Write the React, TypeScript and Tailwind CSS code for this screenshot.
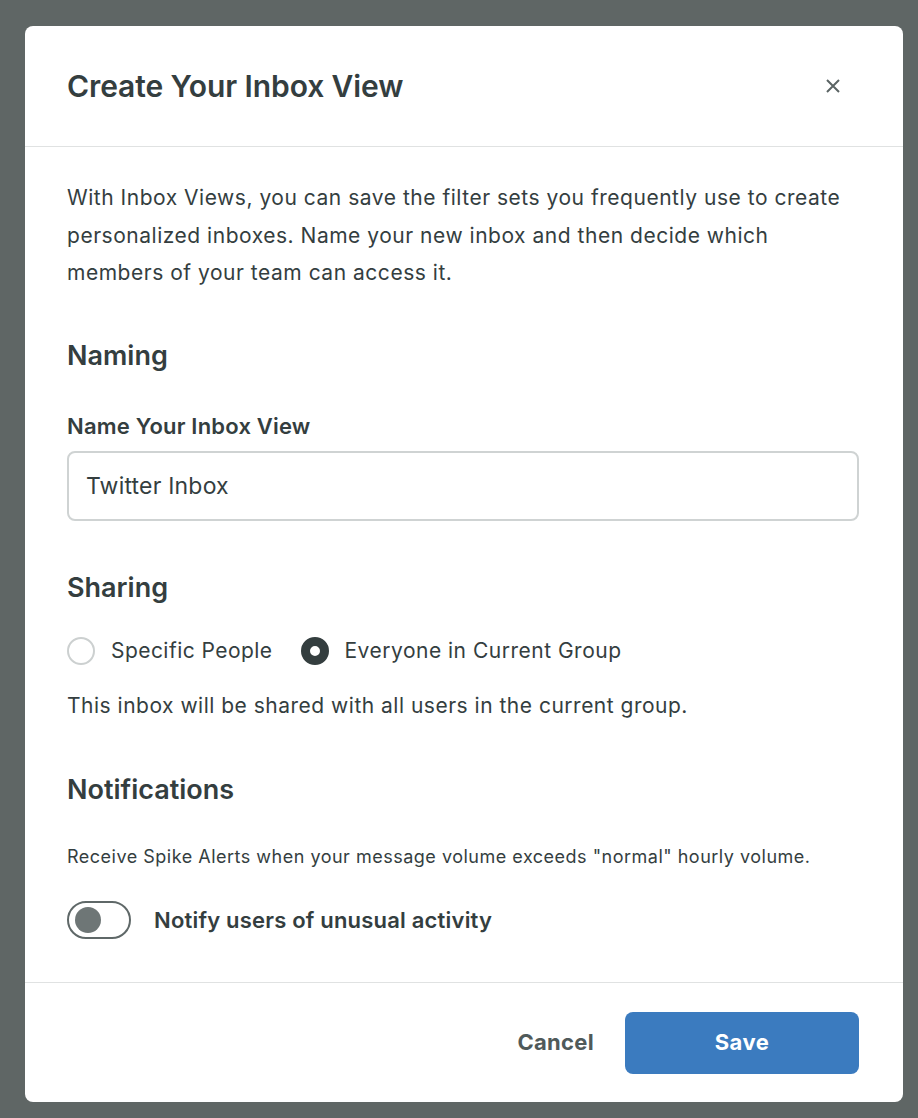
import { useState } from "react";

export default function App() {
  const [name, setName] = useState("Twitter Inbox");
  const [sharing, setSharing] = useState<"specific" | "everyone">("everyone");
  const [notify, setNotify] = useState(false);

  return (
    <div className="min-h-screen w-full bg-[#5f6665] px-[25px] pt-[26px] pb-4 font-['Inter',sans-serif] text-[#343e3f]">
      <div className="w-[878px] rounded-lg bg-white">
        {/* Header */}
        <div className="flex h-[121px] items-center justify-between border-b border-[#e0e2e2] pl-[42px] pr-[62px]">
          <h1 className="text-[30px] font-semibold tracking-[-0.1px]">Create Your Inbox View</h1>
          <button className="text-[#5b6464]" aria-label="Close">
            <svg width="16" height="16" viewBox="0 0 16 16" fill="none" stroke="currentColor" strokeWidth="2">
              <path d="M2 2l12 12M14 2L2 14" />
            </svg>
          </button>
        </div>

        {/* Body */}
        <div className="pl-[42px] pr-[44px] pt-[32px] pb-[43px]">
          <p className="text-[21px] leading-[37.5px] tracking-[0.52px]">
            With Inbox Views, you can save the filter sets you frequently use to create personalized inboxes. Name
            your new inbox and then decide which members of your team can access it.
          </p>

          <h2 className="mt-[46px] text-[27px] font-semibold leading-[36px]">Naming</h2>
          <label className="mt-[38px] block text-[22px] font-semibold leading-[28px] tracking-[0.2px]">
            Name Your Inbox View
          </label>
          <input
            value={name}
            onChange={(e) => setName(e.target.value)}
            className="mt-[11px] h-[70px] w-full rounded-lg border-2 border-[#cfd3d3] px-[17px] text-[23px] tracking-[0.2px] text-[#343e3f] outline-none"
          />

          <h2 className="mt-[49px] text-[27px] font-semibold leading-[36px]">Sharing</h2>
          <div className="mt-[31px] flex items-center gap-[28px]">
            <button className="flex items-center gap-[16px]" onClick={() => setSharing("specific")}>
              <span
                className={
                  sharing === "specific"
                    ? "h-[28px] w-[28px] rounded-full border-[9px] border-[#343e3f]"
                    : "h-[28px] w-[28px] rounded-full border-2 border-[#ccd0d0]"
                }
              />
              <span className="text-[21px] leading-[28px] tracking-[0.45px]">Specific People</span>
            </button>
            <button className="flex items-center gap-[16px]" onClick={() => setSharing("everyone")}>
              <span
                className={
                  sharing === "everyone"
                    ? "h-[28px] w-[28px] rounded-full border-[9px] border-[#343e3f]"
                    : "h-[28px] w-[28px] rounded-full border-2 border-[#ccd0d0]"
                }
              />
              <span className="text-[21px] leading-[28px] tracking-[0.5px]">Everyone in Current Group</span>
            </button>
          </div>
          <p className="mt-[25px] text-[21px] leading-[32px] tracking-[0.5px]">
            This inbox will be shared with all users in the current group.
          </p>

          <h2 className="mt-[50px] text-[27px] font-semibold leading-[36px]">Notifications</h2>
          <p className="mt-[36px] text-[18px] leading-[26px] tracking-[0.5px]">
            Receive Spike Alerts when your message volume exceeds "normal" hourly volume.
          </p>
          <div className="mt-[31px] flex items-center gap-[23px]">
            <button
              onClick={() => setNotify(!notify)}
              className="flex h-[38px] w-[64px] items-center rounded-full border-2 border-[#5f6868] px-[6px]"
            >
              <span
                className={
                  notify
                    ? "ml-auto h-[26px] w-[26px] rounded-full bg-[#3b7bbf]"
                    : "h-[26px] w-[26px] rounded-full bg-[#6e7676]"
                }
              />
            </button>
            <span className="text-[22px] font-semibold leading-[28px] tracking-[0.2px]">
              Notify users of unusual activity
            </span>
          </div>
        </div>

        {/* Footer */}
        <div className="flex items-center justify-end gap-[31px] border-t border-[#e0e2e2] pl-[42px] pr-[44px] pt-[29px] pb-[28px]">
          <button className="text-[22px] font-bold tracking-[0.3px] text-[#505a5a]">Cancel</button>
          <button className="h-[62px] w-[234px] rounded-lg bg-[#3b7bbf] text-[22px] font-bold tracking-[0.5px] text-white">
            Save
          </button>
        </div>
      </div>
    </div>
  );
}
